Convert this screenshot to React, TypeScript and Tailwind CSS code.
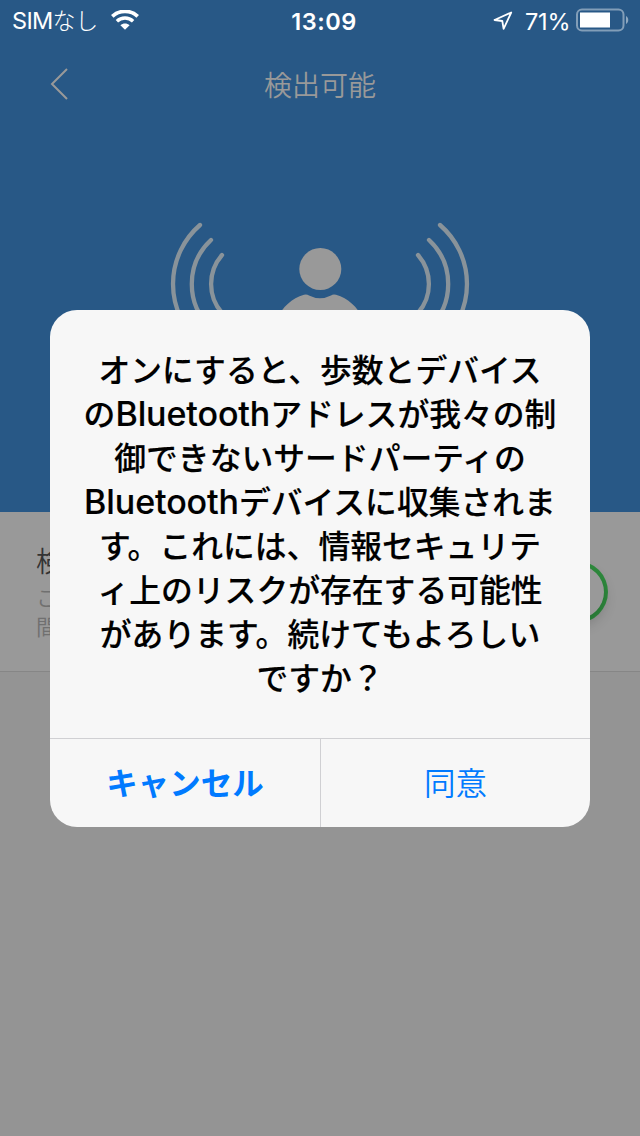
const titleLines = [
  'オンにすると、歩数とデバイス',
  'のBluetoothアドレスが我々の制',
  '御できないサードパーティの',
  'Bluetoothデバイスに収集されま',
  'す。これには、情報セキュリテ',
  'ィ上のリスクが存在する可能性',
  'があります。続けてもよろしい',
  'ですか？',
];

const jp = "font-['Noto_Sans_CJK_JP',sans-serif]";

function StatusBar() {
  return (
    <div className="flex h-10 items-center text-white">
      <div className="flex flex-1 items-center pl-3">
        <span className="w-[99px] whitespace-nowrap font-['Inter','Noto_Sans_CJK_JP',sans-serif] text-[23.5px] font-normal leading-10 tracking-[-0.7px]">
          SIM<span className={`${jp} font-light text-[23px] tracking-[-0.2px]`}>なし</span>
        </span>
        <svg width="28" height="20" viewBox="0 0 28 20" fill="none" stroke="#fff" className="shrink-0">
          <path d="M1.3 6.3C8.3 -0.3 19.7 -0.3 26.7 6.3" strokeWidth="3.7" />
          <path d="M5.9 11.2C10.5 7 17.5 7 22.1 11.2" strokeWidth="3.5" />
          <path d="M9.4 15.2C12 12.8 16 12.8 18.6 15.2L14 19.8Z" fill="#fff" stroke="none" />
        </svg>
      </div>
      <span className="w-[84px] pl-[7px] pt-[3px] text-center font-['Inter',sans-serif] text-[23.5px] font-semibold tracking-[0.5px]">13:09</span>
      <div className="flex flex-1 items-center justify-end pr-[11px]">
        <svg width="20" height="20" viewBox="0 0 20 20" fill="none" stroke="#fff" strokeWidth="1.8" strokeLinejoin="round">
          <path d="M18.2 2.5L1.5 10L9.3 11L10.6 18.8Z" />
        </svg>
        <span className="ml-[12px] w-[51px] whitespace-nowrap pt-[3px] font-['Inter',sans-serif] text-[23.5px] font-normal tracking-[-0.2px]">71%</span>
        <svg width="53" height="24" viewBox="0 0 53 24">
          <rect x="1" y="1.5" width="46.5" height="21" rx="5" fill="none" stroke="#fff" strokeOpacity=".42" strokeWidth="2" />
          <rect x="4" y="4.5" width="30" height="15" fill="#fff" />
          <path d="M50 8V16C53 14.5 53 9.5 50 8Z" fill="#fff" fillOpacity=".48" />
        </svg>
      </div>
    </div>
  );
}

function Beacon() {
  const waves = (
    <g fill="none" stroke="#89939a" strokeWidth="4.3" strokeLinecap="round">
      <path d="M200 15A78 78 0 0 0 200 133" />
      <path d="M211 30A60 60 0 0 0 211 118" />
      <path d="M222 45A44 44 0 0 0 222 103" />
    </g>
  );
  return (
    <svg width="640" height="160" viewBox="0 0 640 160">
      {waves}
      <g transform="translate(640 0) scale(-1 1)">{waves}</g>
      <g fill="#999">
        <circle cx="320.3" cy="59" r="21" />
        <path d="M278 107C282 98 292 88 304 84.8Q307 84.2 309 85.5Q320 91 331 85.5Q333 84 336 84.8C348 88 358 98 362 107Z" />
      </g>
    </svg>
  );
}

function Dialog() {
  return (
    <div className="absolute left-[50px] top-[310px] flex h-[517px] w-[540px] flex-col overflow-hidden rounded-[27px] bg-[#f7f7f7]">
      <div className="flex h-[428px] flex-col items-center pt-9">
        {titleLines.map((line) => (
          <p
            key={line}
            className="h-11 whitespace-nowrap font-['Inter','Noto_Sans_CJK_JP',sans-serif] text-[31.8px] font-medium leading-[44px] text-black [-webkit-text-stroke:0.15px_#000]"
          >
            {line.split(/(Bluetooth)/).map((part, i) => (
              <span key={i} className={part === 'Bluetooth' ? 'text-[34px] tracking-[-0.1px]' : jp}>
                {part}
              </span>
            ))}
          </p>
        ))}
      </div>
      <div className={`flex h-[89px] border-t border-[#d0d0d3] text-[31.5px] text-[#007aff] ${jp}`}>
        <button className="w-[271px] border-r border-[#d0d0d3] pb-0.5 font-bold">キャンセル</button>
        <button className="flex-1 pb-0.5 font-[350]">同意</button>
      </div>
    </div>
  );
}

export default function App() {
  return (
    <div className="relative h-[1136px] w-[640px] overflow-hidden bg-[#949494]">
      <div className="flex h-[512px] flex-col bg-[#285886]">
        <StatusBar />
        <div className="flex h-[88px] items-center justify-between px-[50px] text-[#999]">
          <svg width="18" height="32" viewBox="0 0 18 32" fill="none" stroke="#999" strokeWidth="2">
            <path d="M17 1L2 16L17 31" />
          </svg>
          <h1 className={`text-[28px] font-[350] leading-[40px] ${jp}`}>検出可能</h1>
          <span className="w-[18px]" />
        </div>
        <div className="pt-[82px]">
          <Beacon />
        </div>
      </div>
      <div className={`flex h-[160px] items-center justify-between border-b border-[#868686] bg-[#999] pl-9 pr-8 ${jp}`}>
        <div className="pb-0.5">
          <p className="pb-1 text-[28px] font-[350] leading-[36px] text-[#333]">検出</p>
          <p className="text-[22px] font-[350] leading-[29px] text-[#707070]">
            この
            <br />
            間も
          </p>
        </div>
        <div className="flex h-[62px] w-[102px] justify-end rounded-full bg-[#2e8a3d] p-[4px]">
          <div className="size-[54px] rounded-full bg-[#999] shadow-[0_6px_14px_rgba(0,0,0,0.2)]" />
        </div>
      </div>
      <Dialog />
    </div>
  );
}
